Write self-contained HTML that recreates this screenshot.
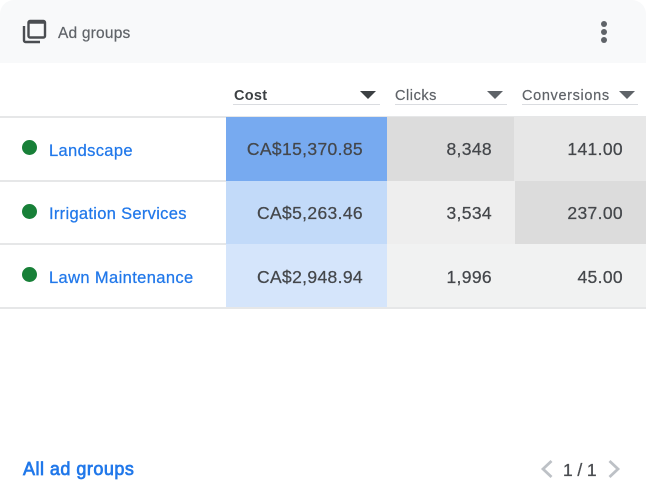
<!DOCTYPE html>
<html>
<head>
<meta charset="utf-8">
<style>
html,body{margin:0;padding:0;width:646px;height:498px;overflow:hidden;background:#fff}
body{font-family:"Liberation Sans",sans-serif;position:relative}
#w{position:absolute;left:0;top:0;width:646px;height:498px;filter:blur(.35px)}
.a{position:absolute;white-space:nowrap}
.r{position:absolute;white-space:nowrap;text-align:right;color:#44474b;font-size:17.5px;line-height:24px;letter-spacing:.35px;-webkit-text-stroke:.25px #44474b}
.l{position:absolute;white-space:nowrap;color:#2178ea;font-size:16.5px;line-height:22px;left:49px;-webkit-text-stroke:.25px #2178ea}
.d{position:absolute;left:22px;width:15px;height:15px;border-radius:50%;background:#188038}
.h{position:absolute;white-space:nowrap;font-size:14.5px;line-height:18px;color:#5f6368;top:87px;-webkit-text-stroke:.2px #5f6368}
.u{position:absolute;top:104px;height:1px;background:#dadce0}
.t{position:absolute;width:0;height:0;border-left:8px solid transparent;border-right:8px solid transparent;border-top:8px solid #5f6368;top:91px}
.c{position:absolute}
.ln{position:absolute;left:0;width:646px;height:2px;background:#e6e7e8}
</style>
</head>
<body>
<div id="w">
<div class="c" style="left:0;top:0;width:646px;height:63px;background:#f8f9fa;border-radius:14px 14px 0 0"></div>

<svg class="c" style="left:22px;top:19px" width="25" height="25" viewBox="0 0 25 25">
<rect x="6.500" y="2" width="16.500" height="16.500" rx="1.500" fill="none" stroke="#4a4d51" stroke-width="2.400"/>
<path d="M6.500 3.200h16.500" stroke="#4a4d51" stroke-width="3" fill="none"/>
<path d="M2 7v14.500a1.500 1.500 0 0 0 1.500 1.500H18" fill="none" stroke="#4a4d51" stroke-width="2.400"/>
</svg>
<div class="a" style="left:58px;top:24px;font-size:15.500px;line-height:20px;color:#5f6368;letter-spacing:.2px;-webkit-text-stroke:.2px #5f6368">Ad groups</div>

<div class="c" style="left:601px;top:21px;width:6px;height:6px;border-radius:50%;background:#5f6368"></div>
<div class="c" style="left:601px;top:29px;width:6px;height:6px;border-radius:50%;background:#5f6368"></div>
<div class="c" style="left:601px;top:37px;width:6px;height:6px;border-radius:50%;background:#5f6368"></div>

<div class="ln" style="top:116px"></div>
<div class="ln" style="top:180px"></div>
<div class="ln" style="top:243px"></div>
<div class="ln" style="top:307px"></div>

<div class="h" style="left:234px;font-weight:bold;color:#3c4043;letter-spacing:.3px;-webkit-text-stroke:0">Cost</div>
<div class="t" style="left:360px;border-top-color:#3c4043"></div>
<div class="u" style="left:233px;width:147px"></div>
<div class="h" style="left:395px;letter-spacing:.55px">Clicks</div>
<div class="t" style="left:487px"></div>
<div class="u" style="left:395px;width:112px"></div>
<div class="h" style="left:522px;letter-spacing:.65px">Conversions</div>
<div class="t" style="left:619px"></div>
<div class="u" style="left:522px;width:116px"></div>

<div class="c" style="left:226px;top:117px;width:161px;height:64px;background:#77aaf0"></div>
<div class="c" style="left:387px;top:117px;width:127px;height:64px;background:#dcdcdc"></div>
<div class="c" style="left:514px;top:117px;width:132px;height:64px;background:#e7e7e7"></div>
<div class="c" style="left:226px;top:181px;width:161px;height:63px;background:#c2daf9"></div>
<div class="c" style="left:387px;top:181px;width:128px;height:63px;background:#eeeeee"></div>
<div class="c" style="left:515px;top:181px;width:131px;height:63px;background:#dcdcdc"></div>
<div class="c" style="left:226px;top:244px;width:161px;height:63px;background:#d5e5fb"></div>
<div class="c" style="left:387px;top:244px;width:259px;height:63px;background:#f1f2f2"></div>

<div class="d" style="top:140px"></div>
<div class="l" style="top:140px;letter-spacing:.35px">Landscape</div>
<div class="r" style="right:283px;top:137px">CA$15,370.85</div>
<div class="r" style="right:154px;top:137px">8,348</div>
<div class="r" style="right:23px;top:137px">141.00</div>

<div class="d" style="top:204px"></div>
<div class="l" style="top:203px;letter-spacing:.3px">Irrigation Services</div>
<div class="r" style="right:283px;top:201px">CA$5,263.46</div>
<div class="r" style="right:154px;top:201px">3,534</div>
<div class="r" style="right:23px;top:201px">237.00</div>

<div class="d" style="top:267px"></div>
<div class="l" style="top:267px;letter-spacing:.38px">Lawn Maintenance</div>
<div class="r" style="right:283px;top:265px">CA$2,948.94</div>
<div class="r" style="right:154px;top:265px">1,996</div>
<div class="r" style="right:23px;top:265px">45.00</div>

<div class="a" style="left:23px;top:458px;font-size:18px;line-height:23px;color:#2178ea;letter-spacing:.48px;-webkit-text-stroke:.7px #2178ea">All ad groups</div>

<svg class="c" style="left:539px;top:459px" width="16" height="20" viewBox="0 0 16 20"><path d="M12.500 2L4 10l8.500 8" fill="none" stroke="#bdc1c6" stroke-width="2.800"/></svg>
<div class="a" style="left:563px;top:459px;font-size:17.500px;line-height:22px;color:#4a4d51;letter-spacing:-.1px;-webkit-text-stroke:.3px #4a4d51">1 / 1</div>
<svg class="c" style="left:606px;top:459px" width="16" height="20" viewBox="0 0 16 20"><path d="M3.500 2L12 10l-8.500 8" fill="none" stroke="#bdc1c6" stroke-width="2.800"/></svg>
</div>
</body>
</html>
